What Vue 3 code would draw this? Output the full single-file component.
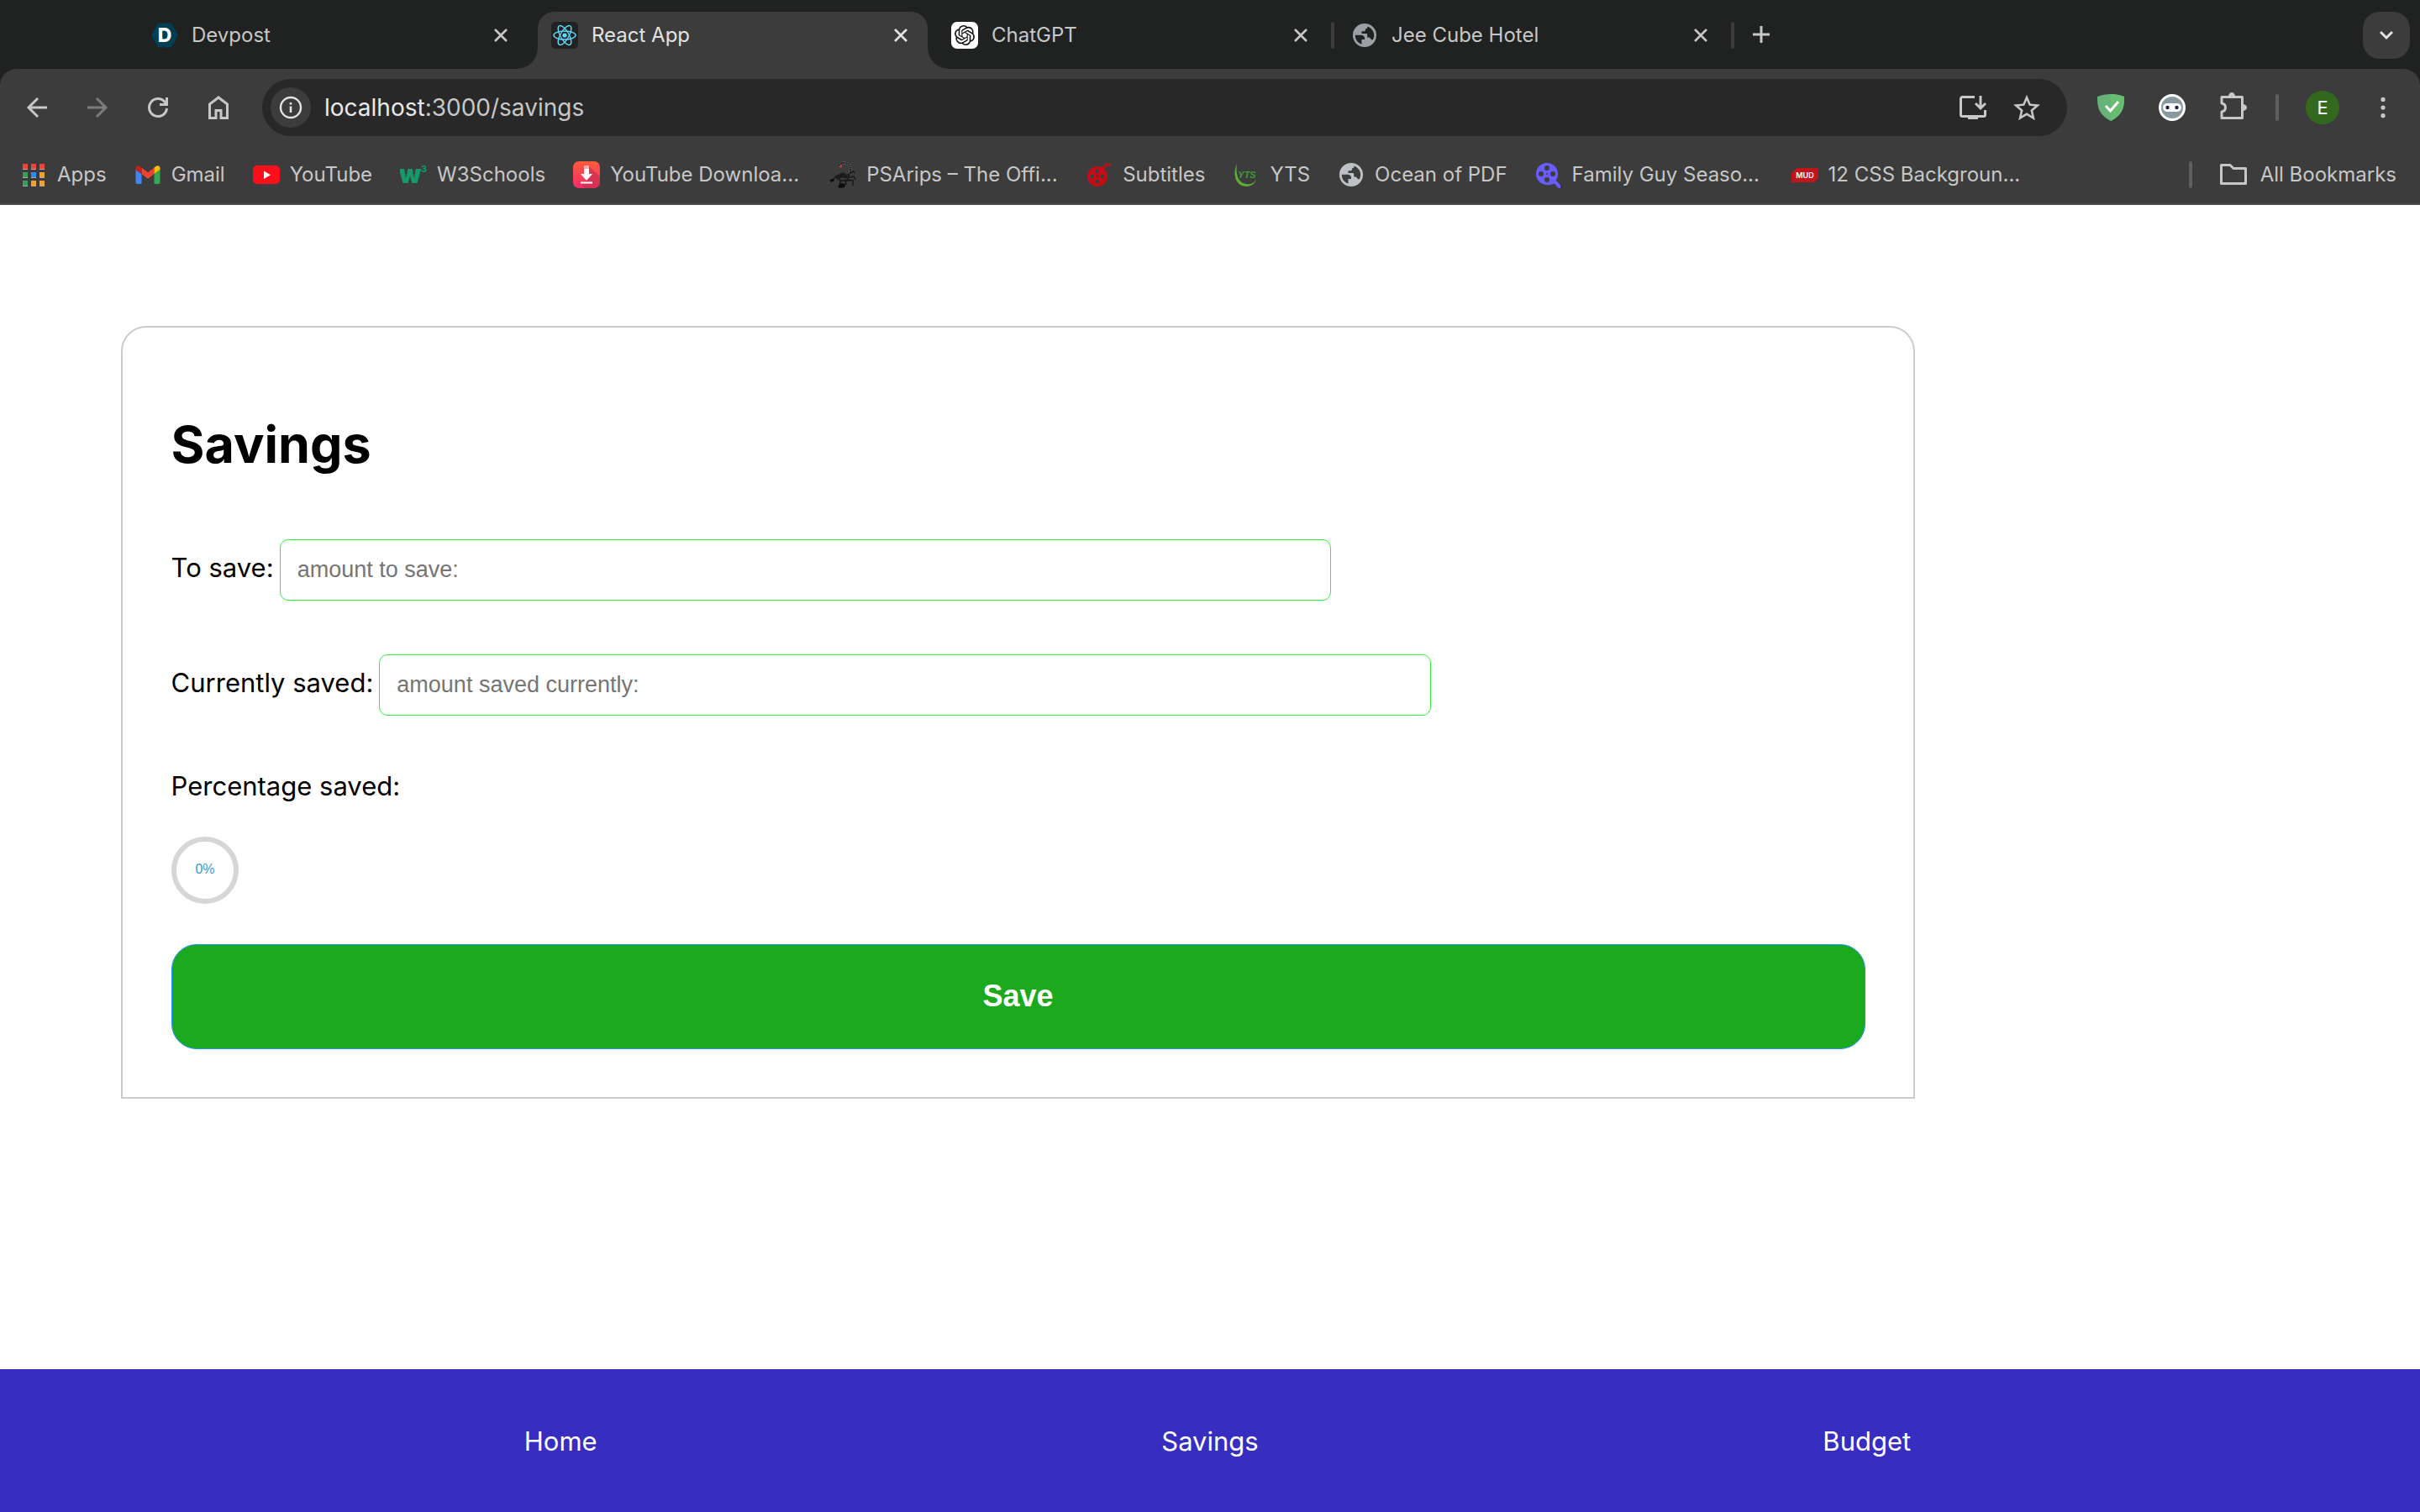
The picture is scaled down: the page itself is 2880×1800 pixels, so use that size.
<script setup>
import { ref, computed } from 'vue'

const tabs = [
  { title: 'Devpost', icon: 'devpost' },
  { title: 'React App', icon: 'react', active: true },
  { title: 'ChatGPT', icon: 'chatgpt' },
  { title: 'Jee Cube Hotel', icon: 'globe', divider: true },
]

const bookmarks = [
  { title: 'Apps', icon: 'apps' },
  { title: 'Gmail', icon: 'gmail' },
  { title: 'YouTube', icon: 'youtube' },
  { title: 'W3Schools', icon: 'w3' },
  { title: 'YouTube Downloa...', icon: 'download', long: true },
  { title: 'PSArips – The Offi...', icon: 'scorpion', long: true },
  { title: 'Subtitles', icon: 'subtitles' },
  { title: 'YTS', icon: 'yts' },
  { title: 'Ocean of PDF', icon: 'globe' },
  { title: 'Family Guy Seaso...', icon: 'reel', long: true },
  { title: '12 CSS Backgroun...', icon: 'mud', long: true },
]

const toSave = ref('')
const saved = ref('')

const percentage = computed(() => {
  const goal = Number(toSave.value)
  if (!goal) return 0
  return Math.min(100, Math.round((Number(saved.value) / goal) * 100))
})

// circumference of the progress ring
const ringLength = 2 * Math.PI * 37
</script>

<template>
  <div class="window">
    <svg class="sprite" aria-hidden="true">
      <symbol id="devpost" viewBox="0 0 32 32">
        <path fill="#003e54" d="M8 1.500h16L32 16l-8 14.500H8L0 16z" />
        <text x="16" y="24" text-anchor="middle" font-family="Inter, sans-serif" font-weight="800" font-size="23" fill="#fff">D</text>
      </symbol>
      <symbol id="react" viewBox="0 0 32 32">
        <rect width="32" height="32" rx="5" fill="#222" />
        <circle cx="16" cy="16" r="2.600" fill="#61dafb" />
        <g fill="none" stroke="#61dafb" stroke-width="1.400">
          <ellipse cx="16" cy="16" rx="13" ry="5" />
          <ellipse cx="16" cy="16" rx="13" ry="5" transform="rotate(60 16 16)" />
          <ellipse cx="16" cy="16" rx="13" ry="5" transform="rotate(120 16 16)" />
        </g>
      </symbol>
      <symbol id="chatgpt" viewBox="0 0 32 32">
        <rect width="32" height="32" rx="7" fill="#fff" />
        <path
          transform="translate(4 4)"
          fill="#111"
          d="M22.2819 9.8211a5.9847 5.9847 0 0 0-.5157-4.9108 6.0462 6.0462 0 0 0-6.5098-2.9A6.0651 6.0651 0 0 0 4.9807 4.1818a5.9847 5.9847 0 0 0-3.9977 2.9 6.0462 6.0462 0 0 0 .7427 7.0966 5.98 5.98 0 0 0 .511 4.9107 6.051 6.051 0 0 0 6.5146 2.9001A5.9847 5.9847 0 0 0 13.2599 24a6.0557 6.0557 0 0 0 5.7718-4.2058 5.9894 5.9894 0 0 0 3.9977-2.9001 6.0557 6.0557 0 0 0-.7475-7.0729zm-9.022 12.6081a4.4755 4.4755 0 0 1-2.8764-1.0408l.1419-.0804 4.7783-2.7582a.7948.7948 0 0 0 .3927-.6813v-6.7369l2.02 1.1686a.071.071 0 0 1 .038.052v5.5826a4.504 4.504 0 0 1-4.4945 4.4944zm-9.6607-4.1254a4.4708 4.4708 0 0 1-.5346-3.0137l.142.0852 4.783 2.7582a.7712.7712 0 0 0 .7806 0l5.8428-3.3685v2.3324a.0804.0804 0 0 1-.0332.0615L9.74 19.9502a4.4992 4.4992 0 0 1-6.1408-1.6464zM2.3408 7.8956a4.485 4.485 0 0 1 2.3655-1.9728V11.6a.7664.7664 0 0 0 .3879.6765l5.8144 3.3543-2.0201 1.1685a.0757.0757 0 0 1-.071 0l-4.8303-2.7865A4.504 4.504 0 0 1 2.3408 7.872zm16.5963 3.8558L13.1038 8.364 15.1192 7.2a.0757.0757 0 0 1 .071 0l4.8303 2.7913a4.4944 4.4944 0 0 1-.6765 8.1042v-5.6772a.79.79 0 0 0-.407-.667zm2.0107-3.0231l-.142-.0852-4.7735-2.7818a.7759.7759 0 0 0-.7854 0L9.409 9.2297V6.8974a.0662.0662 0 0 1 .0284-.0615l4.8303-2.7866a4.4992 4.4992 0 0 1 6.6802 4.66zM8.3065 12.863l-2.02-1.1638a.0804.0804 0 0 1-.038-.0567V6.0742a4.4992 4.4992 0 0 1 7.3757-3.4537l-.142.0805L8.704 5.459a.7948.7948 0 0 0-.3927.6813zm1.0976-2.3654l2.602-1.4998 2.6069 1.4998v2.9994l-2.5974 1.4997-2.6067-1.4997Z"
        />
      </symbol>
      <symbol id="globe" viewBox="0.600 0.600 22.800 22.800">
        <path
          fill="currentColor"
          fill-rule="evenodd"
          d="M12 2a10 10 0 1 0 0 20 10 10 0 1 0 0-20zM4 11.800h5c1.800 0 3 1 3 2.600v1.100h-2.500v4C6.300 18.600 4 15.600 4 11.800zM14.500 4.600c2.900 1 5.500 4 5.500 7.400 0 1.500-.5 2.900-1.200 4l-1.300-.5c-.3-1.200-1-1.800-2.200-1.800h-1v-2.200c0-.6-.4-1-1-1H9.500V8.600h2.200c.6 0 1-.4 1-1V6.400h.8c.6 0 1-.8 1-1.800z"
        />
      </symbol>
      <symbol id="apps" viewBox="0 0 32 32">
        <path fill="#aaa" d="M3 3h6v7H3zM13 3h6v7h-6zM23 3h6v7h-6zM3 13h6v7H3zM13 13h6v7h-6zM23 13h6v7h-6zM3 23h6v7H3zM13 23h6v7h-6zM23 23h6v7h-6z" />
        <path fill="#f8403b" d="M3 3h6v6H3zM13 3h6v6h-6zM23 3h6v6h-6z" />
        <path fill="#3b9d5b" d="M3 13h6v6H3zM3 23h6v6H3z" />
        <path fill="#2a8cf4" d="M13 13h6v6h-6z" />
        <path fill="#f2a229" d="M23 13h6v6h-6zM13 23h6v6h-6zM23 23h6v6h-6z" />
      </symbol>
      <symbol id="gmail" viewBox="0 0 32 32">
        <path fill="#4285f4" d="M1.500 10l7 5v12h-5a2 2 0 0 1-2-2z" />
        <path fill="#34a853" d="M23.500 15l7-5v15a2 2 0 0 1-2 2h-5z" />
        <path fill="#ea4335" d="M8.500 7.500l7.500 5.700 7.500-5.700V15L16 21l-7.500-6z" />
        <path fill="#c5221f" d="M1.500 8c0-2.500 2.800-3.600 4.700-2.200l2.300 1.700V15l-7-5z" />
        <path fill="#fbbc04" d="M30.500 8c0-2.500-2.800-3.600-4.700-2.200l-2.300 1.700V15l7-5z" />
      </symbol>
      <symbol id="youtube" viewBox="0 0 32 32">
        <rect y="5" width="32" height="22" rx="5" fill="#ff0f1b" />
        <path fill="#fff" d="M13 11.500v9.500l8-4.750z" />
      </symbol>
      <symbol id="w3" viewBox="0 0 32 32">
        <text x="-1" y="26" font-family="Inter, sans-serif" font-weight="900" font-size="30" fill="#149a6a">w</text>
        <text x="25" y="13" font-family="Inter, sans-serif" font-weight="700" font-size="11" fill="#149a6a">3</text>
      </symbol>
      <symbol id="download" viewBox="0 0 32 32">
        <path fill="#c8304e" opacity=".7" d="M19 6l13 12v7a7 7 0 0 1-7 7H14l-5-6 9-5z" />
        <path fill="#fff" d="M13 9h6v6h4l-7 8-7-8h4zM9 24.500h14v2H9z" />
        <path fill="#f3b5b0" d="M13 5h6v4h-6z" />
      </symbol>
      <symbol id="scorpion" viewBox="0 0 32 32">
        <path fill="none" stroke="#666" stroke-width="3" d="M12 5c2-5 13-5 13 5 0 5-1 7-4 10" />
        <path fill="none" stroke="#151515" stroke-width="2" stroke-dasharray="1.500 .8" d="M12 5c2-5 13-5 13 5 0 5-1 7-4 10" />
        <path fill="none" stroke="#151515" stroke-width="5" stroke-dasharray="1.800 .6" d="M8 20c6-4 10-3 16-1" />
        <path fill="none" stroke="#191919" stroke-width="1.500" d="M22 16l6-4 3 2M23 19l6-1 2 4M21 22l7 1v6M10 17l-7 5M14 22l-2 6M18 14l-6 2M19 21l1 7M16 14l-5 9M12 23h12" />
        <path fill="#0c0c0c" d="M0 22l5-1 1 2-4 2zM10 30l4-4 5 1-1 4-6 1z" />
        <circle cx="13.500" cy="6" r="1.600" fill="#d33" />
      </symbol>
      <symbol id="subtitles" viewBox="0 0 32 32">
        <circle cx="14" cy="18" r="12" fill="#c20d17" />
        <path fill="none" stroke="#c20d17" stroke-width="3" d="M20 9l5-5h5" />
        <path fill="#3c3c3c" d="M12 10h4v4h-4zM6 16h4v4H6zM18 16h4v4h-4zM12 22h4v4h-4z" />
        <path fill="#a5121a" d="M12 16h4v4h-4z" />
      </symbol>
      <symbol id="yts" viewBox="0 0 32 32">
        <path fill="#5fa83a" d="M5 3C-1 16 4 30 16 30c6 0 10-3 12-8-4 5-8 6-12 5C7 26 3 16 5 3z" />
        <text x="17" y="20" text-anchor="middle" font-family="Liberation Sans, sans-serif" font-style="italic" font-weight="700" font-size="11" fill="#3f9a34">YTS</text>
      </symbol>
      <symbol id="reel" viewBox="0 0 32 32">
        <circle cx="14" cy="15" r="13" fill="#6a5cff" />
        <path fill="none" stroke="#6a5cff" stroke-width="4" d="M14 26c5 1 7-2 10-1s2 5 6 5" />
        <g fill="#3c3c3c">
          <circle cx="14" cy="8" r="3" />
          <circle cx="7" cy="15" r="3" />
          <circle cx="21" cy="15" r="3" />
          <circle cx="14" cy="22" r="3" />
          <circle cx="14" cy="15" r="1" />
        </g>
      </symbol>
      <symbol id="mud" viewBox="0 0 32 32">
        <path fill="#c3141b" d="M7 8h25v17H0V14z" />
        <path fill="#3c3c3c" d="M27 25l5-5v5z" />
        <text x="16" y="20" text-anchor="middle" font-family="Inter, sans-serif" font-weight="600" font-size="9" fill="#fff">MUD</text>
      </symbol>
      <symbol id="star" viewBox="2 1.500 20 20">
        <path fill="currentColor" d="M22 9.240l-7.190-.62L12 2 9.190 8.630 2 9.240l5.460 4.730L5.820 21 12 17.270 18.180 21l-1.630-7.030L22 9.240zM12 15.400l-3.760 2.270 1-4.280-3.320-2.880 4.380-.38L12 6.100l1.710 4.040 4.380.38-3.320 2.880 1 4.280L12 15.400z" />
      </symbol>
      <symbol id="install" viewBox="0 0 32 32">
        <path fill="none" stroke="currentColor" stroke-width="3" d="M18 3.500H3.500a2 2 0 0 0-2 2v19a2 2 0 0 0 2 2h25a2 2 0 0 0 2-2V19M25 2v14M19 11l6 6 6-6" />
        <path fill="currentColor" d="M10 26h12v4H10z" />
      </symbol>
      <symbol id="close" viewBox="0 0 16 16">
        <path fill="none" stroke="currentColor" stroke-width="2.600" d="M1 1l14 14M15 1L1 15" />
      </symbol>
      <symbol id="back" viewBox="0 0 32 32">
        <path fill="none" stroke="currentColor" stroke-width="3" d="M28 16H6M17 5L6 16l11 11" />
      </symbol>
      <symbol id="forward" viewBox="0 0 32 32">
        <path fill="none" stroke="currentColor" stroke-width="3" d="M4 16h22M15 5l11 11-11 11" />
      </symbol>
      <symbol id="reload" viewBox="0 0 32 32">
        <path fill="none" stroke="currentColor" stroke-width="3" d="M26.500 17A10.500 10.500 0 1 1 24 9.200L26.500 12M26.500 4v8.500H18" />
      </symbol>
      <symbol id="home" viewBox="0 0 32 32">
        <path fill="none" stroke="currentColor" stroke-width="3" d="M5.500 12L16 4l10.500 8v16.500H19v-9h-6v9H5.500z" />
      </symbol>
      <symbol id="info" viewBox="0 0 28 28">
        <circle cx="14" cy="14" r="12" fill="none" stroke="currentColor" stroke-width="2.400" />
        <path fill="currentColor" d="M12.700 12.500h2.600V20h-2.600zM12.700 8h2.600v2.600h-2.600z" />
      </symbol>
      <symbol id="shield" viewBox="0 0 32 32">
        <path fill="#67b279" d="M16 0c5 0 11 1 16 3 0 12-1 21-16 29C1 24 0 15 0 3 5 1 11 0 16 0z" />
        <path fill="#68bc71" d="M16 0c5 0 11 1 16 3 0 12-1 21-16 29z" />
        <path fill="none" stroke="#fff" stroke-width="3" d="M10 14l5.500 6L25 9" />
      </symbol>
      <symbol id="robot" viewBox="0 0 32 32">
        <circle cx="16" cy="16" r="14.500" fill="#87999f" stroke="#fff" stroke-width="3" />
        <rect x="5" y="11" width="22" height="10" rx="5" fill="#fff" />
        <circle cx="10.500" cy="16" r="2.200" fill="#1b1f4a" />
        <circle cx="21.500" cy="16" r="2.200" fill="#1b1f4a" />
      </symbol>
      <symbol id="puzzle" viewBox="0 0 32 32">
        <path fill="none" stroke="currentColor" stroke-width="3" stroke-linejoin="round" d="M2 5.500h24.500v25H2v-7.500c6-1 6-9 0-10z" />
        <path fill="currentColor" d="M10 5a4 5 0 0 1 8 0zM27 14a5 4 0 0 1 0 8z" />
      </symbol>
      <symbol id="folder" viewBox="0 0 32 32">
        <path fill="none" stroke="currentColor" stroke-width="3" stroke-linejoin="round" d="M1.500 4.500h10.500l4 4h14.500v18h-29z" />
      </symbol>
      <symbol id="dots" viewBox="0 0 32 32">
        <g fill="currentColor">
          <circle cx="16" cy="5" r="3" />
          <circle cx="16" cy="16" r="3" />
          <circle cx="16" cy="27" r="3" />
        </g>
      </symbol>
      <symbol id="plus" viewBox="0 0 20 20">
        <path fill="none" stroke="currentColor" stroke-width="3" d="M10 0v20M0 10h20" />
      </symbol>
      <symbol id="chevron" viewBox="0 0 16 16">
        <path fill="none" stroke="currentColor" stroke-width="3" d="M1 4l7 7 7-7" />
      </symbol>
    </svg>

    <header class="browser">
      <div class="tabStrip">
        <template v-for="tab in tabs" :key="tab.title">
          <div class="gap"><span v-if="tab.divider" class="divider faint"></span></div>
          <div class="tab" :class="{ active: tab.active }">
            <svg class="icon" :class="tab.icon"><use :href="'#' + tab.icon" /></svg>
            <span class="tabTitle">{{ tab.title }}</span>
            <button class="iconBtn" :aria-label="'Close ' + tab.title">
              <svg class="smallIcon"><use href="#close" /></svg>
            </button>
          </div>
        </template>
        <div class="gap"><span class="divider faint"></span></div>
        <button class="iconBtn newTab" aria-label="New tab">
          <svg class="plusIcon"><use href="#plus" /></svg>
        </button>
        <button class="iconBtn tabSearch" aria-label="Search tabs">
          <svg class="smallIcon"><use href="#chevron" /></svg>
        </button>
      </div>

      <div class="toolbar">
        <button class="iconBtn navBtn" aria-label="Back"><svg class="icon"><use href="#back" /></svg></button>
        <button class="iconBtn navBtn off" aria-label="Forward"><svg class="icon"><use href="#forward" /></svg></button>
        <button class="iconBtn navBtn" aria-label="Reload"><svg class="icon"><use href="#reload" /></svg></button>
        <button class="iconBtn navBtn" aria-label="Home"><svg class="icon"><use href="#home" /></svg></button>
        <div class="address">
          <button class="iconBtn siteInfo" aria-label="Site information">
            <svg class="infoIcon"><use href="#info" /></svg>
          </button>
          <span class="url"><b>localhost</b>:3000/savings</span>
          <button class="iconBtn" aria-label="Install"><svg class="icon"><use href="#install" /></svg></button>
          <button class="iconBtn" aria-label="Bookmark"><svg class="icon"><use href="#star" /></svg></button>
        </div>
        <div class="extensions">
          <button class="iconBtn" aria-label="Ad blocker"><svg class="icon"><use href="#shield" /></svg></button>
          <button class="iconBtn" aria-label="Robot"><svg class="icon"><use href="#robot" /></svg></button>
          <button class="iconBtn" aria-label="Extensions"><svg class="icon raised"><use href="#puzzle" /></svg></button>
        </div>
        <span class="divider"></span>
        <button class="iconBtn avatar">E</button>
        <button class="iconBtn" aria-label="Menu"><svg class="dotsIcon"><use href="#dots" /></svg></button>
      </div>

      <nav class="bookmarks">
        <a v-for="mark in bookmarks" :key="mark.title" href="#" class="bookmark">
          <svg class="icon" :class="mark.icon"><use :href="'#' + mark.icon" /></svg>
          <span :class="{ long: mark.long }">{{ mark.title }}</span>
        </a>
        <span class="divider pushRight"></span>
        <a href="#" class="bookmark allBookmarks">
          <svg class="icon"><use href="#folder" /></svg>
          <span>All Bookmarks</span>
        </a>
      </nav>
    </header>

    <main>
      <form class="card" @submit.prevent>
        <h1>Savings</h1>
        <div class="field">
          <label for="toSave">To save:</label>
          <input id="toSave" v-model="toSave" type="text" placeholder="amount to save:" />
        </div>
        <div class="field">
          <label for="saved">Currently saved:</label>
          <input id="saved" v-model="saved" type="text" placeholder="amount saved currently:" />
        </div>
        <p>Percentage saved:</p>
        <svg class="ring" viewBox="0 0 80 80">
          <circle class="trail" cx="40" cy="40" r="37" />
          <circle
            v-if="percentage > 0"
            class="path"
            cx="40"
            cy="40"
            r="37"
            transform="rotate(-90 40 40)"
            :stroke-dasharray="ringLength"
            :stroke-dashoffset="ringLength * (1 - percentage / 100)"
          />
          <text x="40" y="44" text-anchor="middle">{{ percentage }}%</text>
        </svg>
        <button class="saveBtn" type="submit">Save</button>
      </form>
    </main>

    <footer>
      <a href="#">Home</a>
      <a href="#">Savings</a>
      <a href="#">Budget</a>
    </footer>
  </div>
</template>

<style>
body {
  margin: 0;
  background: #fff;
}
</style>

<style scoped>
.window {
  display: flex;
  flex-direction: column;
  min-height: 100vh;
  font-family: Inter, 'Liberation Sans', sans-serif;
  font-size: 31px;
  color: #000;
}

.sprite {
  display: none;
}

.browser {
  background: #1f2221;
  color: #c7c7c7;
  font-size: 24px;
  line-height: 32px;
}

.icon {
  width: 32px;
  height: 32px;
  flex: none;
}

.smallIcon {
  width: 16px;
  height: 16px;
}

.plusIcon {
  width: 20px;
  height: 20px;
}

.infoIcon,
.dotsIcon {
  width: 28px;
  height: 28px;
}

.iconBtn {
  display: flex;
  align-items: center;
  justify-content: center;
  flex: none;
  padding: 0;
  border: none;
  background: transparent;
  color: inherit;
  font: inherit;
}

.divider {
  width: 4px;
  height: 32px;
  border-radius: 2px;
  background: #5f5f5f;
}

.divider.faint {
  background: #3c3c3c;
}

/* tabs */
.tabStrip {
  display: flex;
  align-items: center;
  height: 68px;
  padding: 14px 12px 0 152px;
}

.gap {
  display: flex;
  justify-content: center;
  width: 12px;
  padding-bottom: 12px;
}

.tab {
  position: relative;
  box-sizing: border-box;
  display: flex;
  align-items: center;
  gap: 16px;
  width: 464px;
  height: 68px;
  padding: 0 24px 12px 16px;
}

.tab.active {
  background: #3c3c3c;
  border-radius: 20px 20px 0 0;
  color: #e3e3e3;
}

.tab.active::before,
.tab.active::after {
  content: '';
  position: absolute;
  bottom: 0;
  width: 24px;
  height: 24px;
}

.tab.active::before {
  left: -24px;
  background: radial-gradient(circle at 0 0, transparent 23px, #3c3c3c 24px);
}

.tab.active::after {
  right: -24px;
  background: radial-gradient(circle at 100% 0, transparent 23px, #3c3c3c 24px);
}

.tab .globe {
  color: #9aa0a6;
}

.tabTitle {
  flex: 1;
}

.newTab {
  width: 56px;
  padding-bottom: 14px;
}

.tabSearch {
  width: 56px;
  height: 56px;
  margin: 0 0 12px auto;
  border-radius: 20px;
  background: #3c3c3c;
  color: #e3e3e3;
}

/* toolbar */
.toolbar {
  display: flex;
  align-items: center;
  height: 92px;
  padding: 0 30px 0 8px;
  background: #3c3c3c;
  border-radius: 20px 20px 0 0;
}

.navBtn {
  width: 72px;
}

.off {
  color: #7c7c7c;
}

.address {
  display: flex;
  align-items: center;
  flex: 1;
  gap: 32px;
  height: 68px;
  margin-left: 16px;
  padding: 0 32px 0 10px;
  border-radius: 34px;
  background: #282828;
}

.siteInfo {
  width: 48px;
  height: 48px;
  margin-right: -16px;
  border-radius: 50%;
  background: #3c3c3c;
  color: #e3e3e3;
}

.url {
  flex: 1;
  font-size: 28px;
}

.url b {
  font-weight: 400;
  color: #e8e8e8;
}

.extensions {
  display: flex;
  gap: 41px;
  margin: 0 34px 0 36px;
}

.raised {
  margin-bottom: 4px;
}

.avatar {
  width: 40px;
  height: 40px;
  margin: 0 38px 0 32px;
  border-radius: 50%;
  background: #33691e;
  color: #fff;
  font-size: 22px;
}

/* bookmarks */
.bookmarks {
  display: flex;
  align-items: center;
  gap: 33px;
  height: 68px;
  padding: 0 28px 0 24px;
  border-bottom: 2px solid #484848;
  background: #3c3c3c;
}

.bookmark {
  display: flex;
  align-items: center;
  gap: 12px;
  color: inherit;
  text-decoration: none;
  white-space: nowrap;
}

.bookmark .globe {
  color: #bdc1c6;
}

.bookmark .download {
  border-radius: 7px;
  background: linear-gradient(#ff5b3a, #f72c6b);
}

.long {
  width: 228px;
}

.pushRight {
  margin-left: auto;
}

.allBookmarks {
  gap: 16px;
}

/* page */
main {
  flex: 1;
}

.card {
  width: 70%;
  margin: 5%;
  padding: 2%;
  border: 2px solid #ccc;
  border-radius: 30px 30px 0 0;
}

h1 {
  margin: 43px 0 75px;
  font-size: 61px;
  line-height: 76px;
}

.field {
  display: flex;
  align-items: baseline;
  gap: 7px;
  margin-bottom: 64px;
}

input {
  width: 60%;
  height: 31px;
  padding: 20px;
  border: 1px solid #30f03c;
  border-radius: 10px;
  font-family: 'Liberation Sans', Arial, sans-serif;
  font-size: 27px;
}

input::placeholder {
  color: #757575;
}

p {
  margin: 0 0 40px;
  line-height: 40px;
}

.ring {
  display: block;
  width: 80px;
  height: 80px;
}

.ring circle {
  fill: none;
  stroke-width: 6px;
}

.trail {
  stroke: #d6d6d6;
}

.path {
  stroke: #3e98c7;
}

.ring text {
  fill: #3e98c7;
  font-family: 'Liberation Sans', Arial, sans-serif;
  font-size: 16px;
}

.saveBtn {
  width: 100%;
  height: 125px;
  margin-top: 48px;
  border: 1px solid #1e90ff;
  border-radius: 30px;
  background: #1ba91e;
  color: #fff;
  font-family: 'Liberation Sans', Arial, sans-serif;
  font-size: 36px;
  font-weight: bold;
}

.saveBtn:hover {
  cursor: pointer;
}

footer {
  display: flex;
  align-items: center;
  justify-content: space-around;
  height: 170px;
  padding: 0 270px 0 288px;
  background: #372dc1;
}

footer a {
  color: #fff;
  text-decoration: none;
}
</style>
